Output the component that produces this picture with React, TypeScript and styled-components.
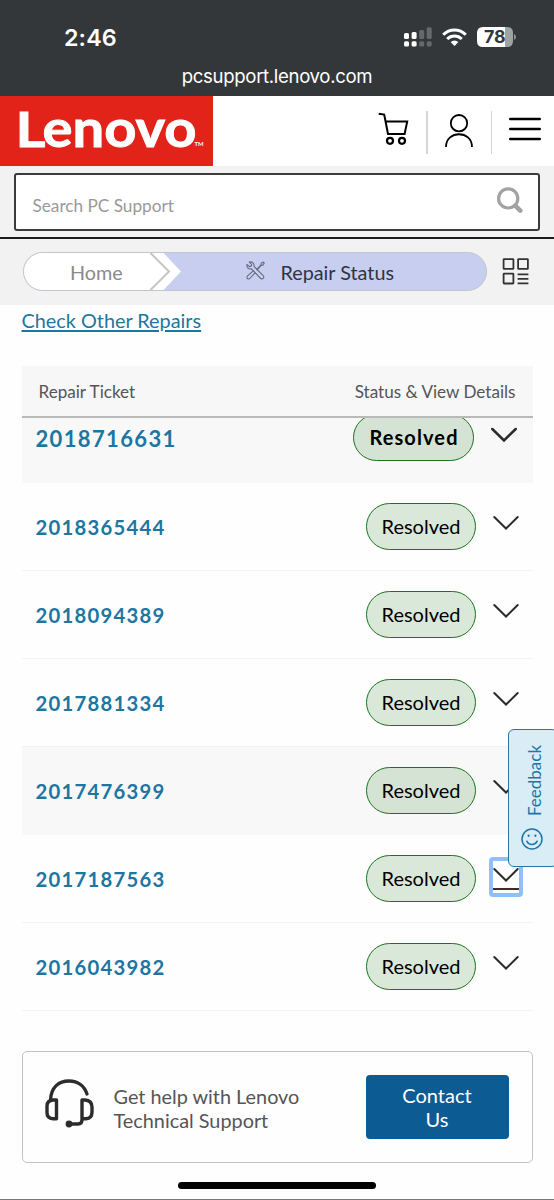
import React from "react";
import styled, { createGlobalStyle, css } from "styled-components";

const GlobalStyle = createGlobalStyle`
  * { box-sizing: border-box; }
  body {
    margin: 0;
    background: #fff;
    font-family: Lato, "Liberation Sans", sans-serif;
    color: #222;
  }
`;

const Screen = styled.div`
  position: relative;
  width: 554px;
  height: 1200px;
  overflow: hidden;
  display: flex;
  flex-direction: column;
  background: #fefefe;
  border-bottom: 1px solid #777;
`;

const BrowserTop = styled.header`
  height: 96px;
  flex: none;
  background: #34373a;
  color: #fff;
  font-family: Inter, Roboto, sans-serif;
  display: flex;
  flex-direction: column;
`;

const StatusBar = styled.div`
  display: flex;
  align-items: center;
  height: 56px;
  padding: 18px 38px 0 64px;
`;

const Clock = styled.span`
  flex: 1;
  font-size: 23.3px;
  font-weight: 600;
  letter-spacing: 0.1px;
`;

const StatusIcons = styled.div`
  display: flex;
  align-items: center;
  gap: 10px;
`;

const Address = styled.div`
  text-align: center;
  font-size: 18.6px;
  line-height: 24px;
  margin-top: 8px;
  letter-spacing: -0.34px;
`;

const SiteHeader = styled.div`
  height: 70px;
  flex: none;
  display: flex;
  justify-content: space-between;
  background: #fff;
`;

const Logo = styled.div`
  width: 213px;
  height: 70px;
  background: #e2231a;

  svg {
    display: block;
    overflow: visible;
  }
`;

const HeaderTools = styled.nav`
  display: flex;
  align-items: flex-start;
  padding: 15px 13px 0 0;
`;

const Tool = styled.div<{ $w: number; $left?: number; $lift: number }>`
  width: ${(p) => p.$w}px;
  height: 43px;
  padding-left: ${(p) => p.$left ?? 0}px;
  padding-bottom: ${(p) => p.$lift * 2}px;
  display: flex;
  align-items: center;
  svg { flex: none; }
`;

const Divider = styled.i`
  width: 1.5px;
  height: 43px;
  background: #d5d5d5;
`;

const SearchBand = styled.div`
  flex: none;
  height: 73px;
  padding: 7px 14px 0;
  background: #f2f2f2;
  border-bottom: 2px solid #1c1c1c;
`;

const SearchBox = styled.div`
  height: 57.5px;
  border: 2px solid #3b3b3b;
  border-radius: 3px;
  background: #fff;
  display: flex;
  align-items: center;
  justify-content: space-between;
  padding: 8px 15px 0 16.5px;
  color: #999;
  font-size: 17.2px;

  svg { margin-top: -10px; }
`;

const CrumbBand = styled.div`
  flex: none;
  height: 66px;
  padding: 13px 24px 0 23px;
  display: flex;
  align-items: flex-start;
  gap: 15px;
  background: #f2f2f2;
`;

const Crumbs = styled.div`
  display: flex;
  align-items: stretch;
  width: 464px;
  height: 39px;
  border: 1px solid #c4c5ca;
  border-radius: 20px;
  background: #c8cef0;
  overflow: hidden;
  font-size: 19.8px;
`;

const HomeCrumb = styled.div`
  width: 126px;
  padding: 1px 0 0 46px;
  display: flex;
  align-items: center;
  background: #fff;
  color: #8a8a8a;
`;

const CurrentCrumb = styled.div`
  display: flex;
  align-items: center;
  gap: 15.5px;
  padding: 1px 0 0 62px;
  color: #2f3440;

  svg { margin-top: -3px; }
`;

const GridButton = styled.div`
  padding-top: 6px;
`;

const Main = styled.main`
  padding: 2px 22px 0;
  display: flex;
  flex-direction: column;
`;

const OtherRepairs = styled.a`
  align-self: flex-start;
  height: 58px;
  line-height: 26px;
  font-size: 19.85px;
  margin-left: -0.5px;
  color: #1d769f;
  text-decoration: underline;
  text-decoration-thickness: 1.5px;
  text-underline-offset: 2px;
`;

const TableHead = styled.div`
  width: 511px;
  height: 52px;
  margin-left: -0.5px;
  margin-top: 1px;
  padding: 0 17px;
  display: flex;
  align-items: center;
  justify-content: space-between;
  background: #f7f7f7;
  border-bottom: 2px solid #b9b9b9;
  font-size: 17.1px;
  color: #555;
`;

const TableBody = styled.div`
  width: 511px;
  height: 594px;
  margin-left: -0.5px;
  overflow: hidden;
  display: flex;
  flex-direction: column;
`;

const Row = styled.div<{ $shaded?: boolean; $large?: boolean }>`
  flex: none;
  height: 88px;
  display: flex;
  align-items: center;
  padding: 0 14px;
  background: ${(p) => (p.$shaded ? "#f8f8f8" : "#fefefe")};
  border-bottom: 1px solid ${(p) => (p.$shaded ? "#f8f8f8" : "#f3f3f3")};
  ${(p) => p.$large && css`margin-top: -23px; padding-right: 15.5px;`}
`;

const Ticket = styled.a<{ $large?: boolean }>`
  flex: 1;
  font-weight: 700;
  font-size: ${(p) => (p.$large ? 22 : 20.3)}px;
  letter-spacing: ${(p) => (p.$large ? 1.35 : 1.25)}px;
  color: #1d76a2;
`;

const Pill = styled.span<{ $large?: boolean; $shaded?: boolean }>`
  width: ${(p) => (p.$large ? 121 : 110)}px;
  height: 47px;
  display: flex;
  align-items: center;
  justify-content: center;
  padding: 0 0 2px 1px;
  border: 1.5px solid #18751c;
  border-radius: 24px;
  background: ${(p) => (p.$shaded ? "#d5e3d5" : "#dae8da")};
  color: #000;
  font-size: 20px;
  letter-spacing: 0;
  ${(p) => p.$large && css`margin-top: -2px; font-weight: 700; letter-spacing: 1.1px;`}
`;

const Toggle = styled.button<{ $focused?: boolean }>`
  width: 34px;
  height: 40px;
  margin: -3px -4px 0 13px;
  padding: 6px 0 0;
  border: 4px solid ${(p) => (p.$focused ? "#8fc0fb" : "transparent")};
  border-radius: 4px;
  background: transparent;
  display: flex;
  flex-direction: column;
  align-items: center;
  justify-content: flex-start;
  svg { flex: none; }
`;

const Underline = styled.i`
  flex: none;
  width: 26px;
  height: 2px;
  margin-top: 5px;
  background: #3a2d31;
`;

const HelpCard = styled.section`
  width: 511px;
  height: 112px;
  margin: 39px 0 0 -0.5px;
  padding: 0 23px 0 22px;
  display: flex;
  align-items: center;
  border: 1.5px solid #c2c2c2;
  border-radius: 5px;
`;

const HeadsetSlot = styled.div`
  display: flex;
  padding-bottom: 7px;
`;

const HelpText = styled.p`
  flex: 1;
  margin: 1px 0 0 20px;
  font-size: 19.85px;
  line-height: 24px;
  color: #555;
`;

const ContactButton = styled.button`
  width: 143px;
  height: 64px;
  padding: 0 30px;
  border: 0;
  border-radius: 4px;
  background: #0c5b93;
  color: #fff;
  font: 400 20px/24px Lato, sans-serif;
`;

const Feedback = styled.aside`
  position: absolute;
  left: 508px;
  top: 729px;
  width: 50px;
  height: 138px;
  border: 1.5px solid #2476a3;
  border-radius: 6px;
  background: #d9edf7;
  color: #1d76a3;
  display: flex;
  flex-direction: column;
  align-items: center;
  padding: 15px 2px 0 0;
  gap: 12px;
`;

const FeedbackLabel = styled.span`
  writing-mode: vertical-rl;
  transform: rotate(180deg);
  font-size: 17px;
  line-height: 20px;
  height: 71px;
  white-space: nowrap;
  margin-left: 6px;
`;

const HomeIndicator = styled.div`
  position: absolute;
  left: 178px;
  bottom: 10px;
  width: 198px;
  height: 7px;
  border-radius: 4px;
  background: #000;
`;

const tickets = [
  { id: "2018716631", shaded: true, large: true },
  { id: "2018365444" },
  { id: "2018094389" },
  { id: "2017881334" },
  { id: "2017476399", shaded: true },
  { id: "2017187563", focused: true },
  { id: "2016043982" },
] as { id: string; shaded?: boolean; large?: boolean; focused?: boolean }[];

const SignalIcon = () => (
  <svg width="28" height="20" viewBox="0 0 28 20">
    <g fill="#fff">
      <rect x="0" y="6" width="5" height="6" rx="1.5" />
      <rect x="7.6" y="5" width="5" height="7" rx="1.5" />
      <rect x="0" y="14.2" width="5" height="5.2" rx="1.5" />
      <rect x="7.6" y="14.2" width="5" height="5.2" rx="1.5" />
    </g>
    <g fill="#66696b">
      <rect x="15.2" y="3" width="5" height="9" rx="1.5" />
      <rect x="22.7" y="0.3" width="5" height="11.7" rx="1.5" />
      <rect x="15.2" y="14.2" width="5" height="5.2" rx="1.5" />
      <rect x="22.7" y="14.2" width="5" height="5.2" rx="1.5" />
    </g>
  </svg>
);

const WifiIcon = () => (
  <svg width="25" height="18" viewBox="0 0 25 18" fill="none" stroke="#fff" strokeWidth="3">
    <path d="M1.2 6.8C7.5.3 17.5.3 23.8 6.8" />
    <path d="M5.2 11C9.3 7 15.7 7 19.8 11" />
    <path d="M8.6 14Q12.5 10.8 16.4 14L12.5 18Z" fill="#fff" stroke="none" />
  </svg>
);

const BatteryIcon = () => (
  <svg width="39" height="20" viewBox="0 0 39 20">
    <path d="M6 0H28V20H6Q0 20 0 14V6Q0 0 6 0Z" fill="#fff" />
    <path d="M28 0H30Q36 0 36 6V14Q36 20 30 20H28Z" fill="#a0a2a3" />
    <path d="M37 7Q39 8 39 10T37 13Z" fill="#929596" />
    <text x="17.8" y="16.3" textAnchor="middle" fontFamily="Inter" fontSize="17.8" fontWeight="700" fill="#34373a">78</text>
  </svg>
);

const CartIcon = () => (
  <svg width="31" height="34" viewBox="0 0 31 34" fill="none" stroke="#000" strokeWidth="2">
    <path d="M.7 1.8L6.2 2.6L10 22H26.6L29.2 9.6H8" />
    <circle cx="12" cy="28.8" r="3" strokeWidth="2.2" />
    <circle cx="24" cy="28.8" r="3" strokeWidth="2.2" />
  </svg>
);

const UserIcon = () => (
  <svg width="28" height="34" viewBox="0 0 28 34" fill="none" stroke="#000" strokeWidth="1.8">
    <circle cx="14" cy="9.2" r="8.2" />
    <path d="M1 33C1 16 27 16 27 33" />
  </svg>
);

const MenuIcon = () => (
  <svg width="32" height="24" viewBox="0 0 32 24" stroke="#000" strokeWidth="2.4" strokeLinecap="round">
    <path d="M1.2 2H30.8M1.2 12H30.8M1.2 22H30.8" />
  </svg>
);

const SearchIcon = () => (
  <svg width="26" height="27" viewBox="0 0 26 27" fill="none" stroke="#a3a3a3" strokeLinecap="round">
    <circle cx="11.2" cy="11.4" r="9.6" strokeWidth="3.2" />
    <path d="M19 19.4L23.3 23.6" strokeWidth="4.6" />
  </svg>
);

const CrumbArrow = () => (
  <svg width="34" height="37" viewBox="0 0 34 37">
    <path d="M0 0H13.5L31 18.5L13.5 37H0Z" fill="#fff" />
    <path d="M-1 -1.5L19 18.5L-1 38.5" fill="none" stroke="#c5c5c5" strokeWidth="2" />
  </svg>
);

const ToolsIcon = () => (
  <svg width="19" height="19" viewBox="0 0 19 19" fill="none" stroke="#686b80" strokeWidth="1.1" strokeLinejoin="round">
    <path d="M3.2 1.1L5.6 3.4L5.2 5.1L3.4 5.6L1 3.3C.2 6.3 2.5 8.5 5.4 7.8L14.2 17C16.4 19.2 19.2 16.5 17 14.4L8 5.4C8.6 2.5 6.2.2 3.2 1.1Z" />
    <path d="M7.6 9.6L1.8 14.7C-.5 17 2.3 19.2 4.3 17L9.4 11.4M10.2 8.8L14.8 4.2L15.2 2.3L17.4 1L18.2 1.9L16.9 4.1L15 4.5L10.8 9" />
  </svg>
);

const GridIcon = () => (
  <svg width="27" height="27" viewBox="0 0 27 27" fill="none" stroke="#333" strokeWidth="1.8" strokeLinejoin="round">
    <rect x="1.6" y="1.1" width="9.8" height="9.8" rx=".5" />
    <rect x="16.1" y="1.1" width="9.8" height="9.8" rx=".5" />
    <rect x="1.6" y="15.7" width="9.8" height="9.8" rx=".5" />
    <path d="M15.6 16.3H26.4M15.6 20.8H26.4M15.6 25.4H26.4" />
  </svg>
);

const Chevron = ({ large }: { large?: boolean }) => (
  <svg width="26" height="16" viewBox="0 0 26 16" fill="none" stroke="#2d2a2d" strokeWidth={large ? 2.5 : 2} strokeLinecap="round">
    <path d="M1.3 2L13 13.5L24.7 2" />
  </svg>
);

const HeadsetIcon = () => (
  <svg width="49" height="49" viewBox="0 0 49 49" fill="none" stroke="#2c2c2c" strokeWidth="3.4" strokeLinejoin="round">
    <path d="M5.5 21C6 8 14 2 24 2C33 2 39.5 7 42 15" strokeLinecap="round" />
    <path d="M11.5 21H8Q2 21.5 2 27V33.5Q2 39.5 8 39.8H11.5Z" />
    <path d="M37 21H40Q47 21.5 47 28V33Q47 39.5 41 39.8H37ZM37 39V41Q37 45 33 45H25" />
    <circle cx="24" cy="45" r="3.4" fill="#2c2c2c" stroke="none" />
  </svg>
);

const SmileIcon = () => (
  <svg width="22" height="22" viewBox="0 0 22 22" fill="none" stroke="#1d76a3" strokeWidth="1.5" strokeLinecap="round">
    <circle cx="11" cy="11" r="10" />
    <path d="M5.8 13.2Q7.4 16.5 11 16.5T16.2 13.2" />
    <path d="M7.6 7.5V7.8M14.4 7.5V7.8" strokeWidth="2.2" />
  </svg>
);

const LenovoLogo = () => (
  <svg width="213" height="70" viewBox="0 0 213 70" fill="#fff" stroke="#fff" fontFamily="Lato, sans-serif" fontWeight="700">
    <text x="15.5" y="50.6" fontSize="48" strokeWidth="0.8" textLength="30" lengthAdjust="spacingAndGlyphs">L</text>
    <text x="42.5" y="50.8" fontSize="52" strokeWidth="0.9" textLength="154" lengthAdjust="spacingAndGlyphs">enovo</text>
    <text x="194.5" y="50.3" fontSize="5.5" stroke="none" textLength="9" lengthAdjust="spacingAndGlyphs">TM</text>
  </svg>
);

export default function App() {
  return (
    <>
      <GlobalStyle />
      <Screen>
        <BrowserTop>
          <StatusBar>
            <Clock>2:46</Clock>
            <StatusIcons>
              <SignalIcon />
              <WifiIcon />
              <BatteryIcon />
            </StatusIcons>
          </StatusBar>
          <Address>pcsupport.lenovo.com</Address>
        </BrowserTop>

        <SiteHeader>
          <Logo><LenovoLogo /></Logo>
          <HeaderTools>
            <Tool $w={48} $lift={4}><CartIcon /></Tool>
            <Divider />
            <Tool $w={63} $left={17} $lift={2}><UserIcon /></Tool>
            <Divider />
            <Tool $w={49} $left={16.5} $lift={3.5}><MenuIcon /></Tool>
          </HeaderTools>
        </SiteHeader>

        <SearchBand>
          <SearchBox>
            Search PC Support
            <SearchIcon />
          </SearchBox>
        </SearchBand>

        <CrumbBand>
          <Crumbs>
            <HomeCrumb>Home</HomeCrumb>
            <CrumbArrow />
            <CurrentCrumb>
              <ToolsIcon />
              Repair Status
            </CurrentCrumb>
          </Crumbs>
          <GridButton><GridIcon /></GridButton>
        </CrumbBand>

        <Main>
          <OtherRepairs>Check Other Repairs</OtherRepairs>
          <TableHead>
            <span>Repair Ticket</span>
            <span>Status &amp; View Details</span>
          </TableHead>
          <TableBody>
            {tickets.map((t) => (
              <Row key={t.id} $shaded={t.shaded} $large={t.large}>
                <Ticket $large={t.large}>{t.id}</Ticket>
                <Pill $large={t.large} $shaded={t.shaded}>Resolved</Pill>
                <Toggle $focused={t.focused}>
                  <Chevron large={t.large} />
                  {t.focused && <Underline />}
                </Toggle>
              </Row>
            ))}
          </TableBody>
          <HelpCard>
            <HeadsetSlot><HeadsetIcon /></HeadsetSlot>
            <HelpText>Get help with Lenovo<br />Technical Support</HelpText>
            <ContactButton>Contact Us</ContactButton>
          </HelpCard>
        </Main>

        <Feedback>
          <FeedbackLabel>Feedback</FeedbackLabel>
          <SmileIcon />
        </Feedback>
        <HomeIndicator />
      </Screen>
    </>
  );
}
